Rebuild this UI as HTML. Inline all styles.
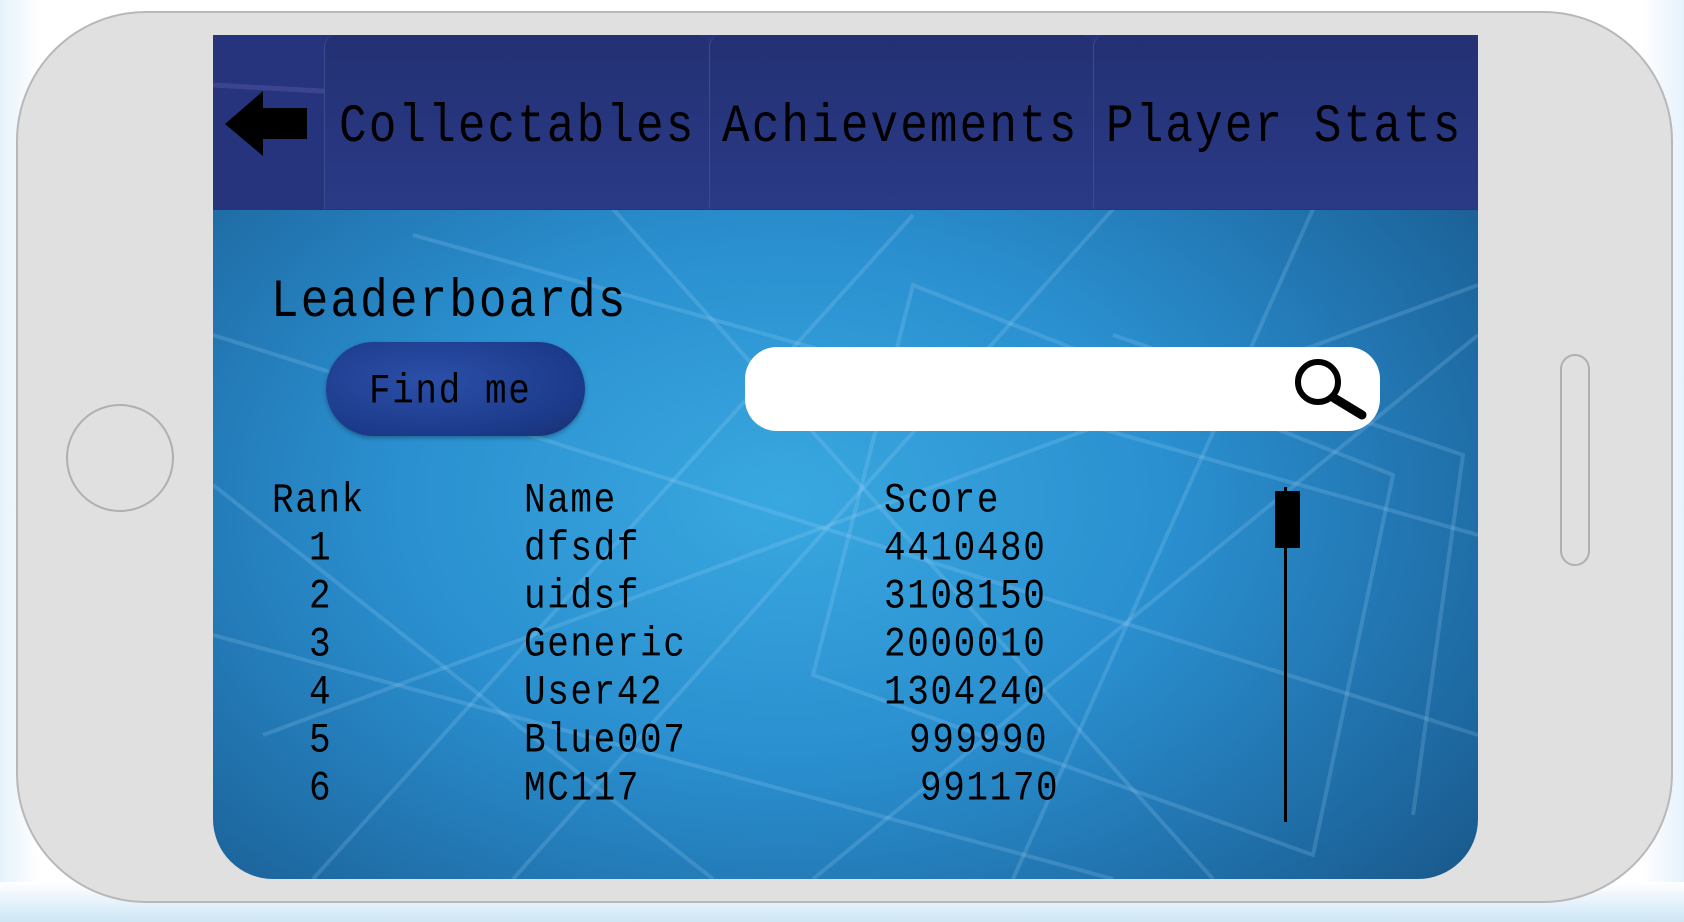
<!DOCTYPE html>
<html><head><meta charset="utf-8"><style>
html,body{margin:0;padding:0}
body{width:1684px;height:922px;position:relative;overflow:hidden;background:linear-gradient(90deg,#e6f2fb 0,#fff 40px,#fff 1640px,#e6f2fb 1684px);font-family:"Liberation Mono",monospace;}
.bot{position:absolute;left:0;right:0;bottom:0;height:40px;background:linear-gradient(180deg,#fff,#cde6f6)}
.phone{position:absolute;left:16px;top:11px;width:1657px;height:892px;background:#e0e0e0;border:2px solid #b8b8b8;border-radius:130px;box-sizing:border-box}
.home{position:absolute;left:66px;top:404px;width:108px;height:108px;border:2px solid #b0b0b0;border-radius:50%;box-sizing:border-box}
.slot{position:absolute;left:1560px;top:354px;width:30px;height:212px;border:2px solid #b0b0b0;border-radius:15px;box-sizing:border-box}
.screen{position:absolute;left:213px;top:35px;width:1265px;height:844px;border-radius:0 0 60px 60px;overflow:hidden;background:radial-gradient(ellipse at 45% 55%,#39a8e0 0,#2a8fcf 40%,#1e6aa3 75%,#174f7e 100%)}
.hdr{position:absolute;left:0;top:0;width:1265px;height:174px;background:#25347c}
.tab{position:absolute;top:0;height:174px;border-left:1px solid #3c4a8e;border-radius:12px 12px 0 0;background:linear-gradient(180deg,#233073,#2a3a86)}
.t{position:absolute;white-space:pre;color:#000;transform:scaleY(1.17);transform-origin:0 0;line-height:1}
.big{font-size:46px;letter-spacing:2.1px}
.mid{font-size:36px;letter-spacing:1.6px}
</style></head><body>
<div class="bot"></div>
<div class="phone"></div>
<div class="home"></div>
<div class="slot"></div>
<div class="screen">
<svg width="1265" height="844" style="position:absolute;left:0;top:0" fill="none" stroke="rgba(180,220,255,0.18)" stroke-width="4">
<path d="M0 300 L1265 700"/><path d="M100 844 L700 180"/><path d="M300 844 L900 174"/><path d="M600 844 L1265 300"/><path d="M0 600 L900 844"/><path d="M200 200 L1265 500"/><path d="M800 844 L1100 174"/><path d="M0 450 L500 844"/><path d="M400 174 L1000 844"/><path d="M50 700 L1265 250"/><path d="M700 250 L1180 440 L1100 820 L600 640 Z"/><path d="M900 300 L1250 420 L1200 780"/>
</svg>
<div class="hdr">
<svg width="1265" height="174" style="position:absolute;left:0;top:0" fill="none" stroke="rgba(150,140,220,0.2)" stroke-width="5"><path d="M0 50 L1265 120"/><path d="M200 0 L500 174"/><path d="M450 0 L300 174"/><path d="M800 0 L1100 174"/><path d="M1100 0 L900 174"/><path d="M600 174 L1265 30"/></svg>
<div class="tab" style="left:111px;width:384px"></div>
<div class="tab" style="left:496px;width:383px"></div>
<div class="tab" style="left:880px;width:385px"></div>
<svg width="90" height="70" style="position:absolute;left:12px;top:56px"><path d="M0 33 L38 0 L38 17 L82 17 L82 48 L38 48 L38 65 Z" fill="#000"/></svg>
</div>
<div style="position:absolute;left:0;top:174px;width:1265px;height:1px;background:#1c3d6a"></div>
</div>
<div class="t big" style="left:339px;top:100px">Collectables</div>
<div class="t big" style="left:722px;top:100px">Achievements</div>
<div class="t big" style="left:1106px;top:100px">Player Stats</div>
<div class="t big" style="left:271px;top:275px">Leaderboards</div>
<div style="position:absolute;left:326px;top:342px;width:259px;height:94px;border-radius:47px;background:radial-gradient(ellipse at 40% 40%,#2b4fa8,#1c3a8a 70%,#18306f);box-shadow:0 2px 4px rgba(0,0,0,.3)"></div>
<div class="t mid" style="left:369px;top:371px">Find me</div>
<div style="position:absolute;left:745px;top:347px;width:635px;height:84px;border-radius:32px;background:#fff"></div>
<svg width="90" height="70" style="position:absolute;left:1294px;top:358px"><circle cx="24" cy="24" r="20" fill="none" stroke="#000" stroke-width="6"/><path d="M40 40 L68 57" stroke="#000" stroke-width="9" stroke-linecap="round"/></svg>
<div class="t mid" style="left:272px;top:480px">Rank</div>
<div class="t mid" style="left:524px;top:480px">Name</div>
<div class="t mid" style="left:884px;top:480px">Score</div>
<div class="t mid" style="left:309px;top:528px">1</div><div class="t mid" style="left:524px;top:528px">dfsdf</div><div class="t mid" style="left:884px;top:528px">4410480</div>
<div class="t mid" style="left:309px;top:576px">2</div><div class="t mid" style="left:524px;top:576px">uidsf</div><div class="t mid" style="left:884px;top:576px">3108150</div>
<div class="t mid" style="left:309px;top:624px">3</div><div class="t mid" style="left:524px;top:624px">Generic</div><div class="t mid" style="left:884px;top:624px">2000010</div>
<div class="t mid" style="left:309px;top:672px">4</div><div class="t mid" style="left:524px;top:672px">User42</div><div class="t mid" style="left:884px;top:672px">1304240</div>
<div class="t mid" style="left:309px;top:720px">5</div><div class="t mid" style="left:524px;top:720px">Blue007</div><div class="t mid" style="left:909px;top:720px">999990</div>
<div class="t mid" style="left:309px;top:768px">6</div><div class="t mid" style="left:524px;top:768px">MC117</div><div class="t mid" style="left:920px;top:768px">991170</div>
<div style="position:absolute;left:1284px;top:487px;width:3px;height:335px;background:#000"></div>
<div style="position:absolute;left:1275px;top:491px;width:25px;height:57px;background:#000"></div>
</body></html>
